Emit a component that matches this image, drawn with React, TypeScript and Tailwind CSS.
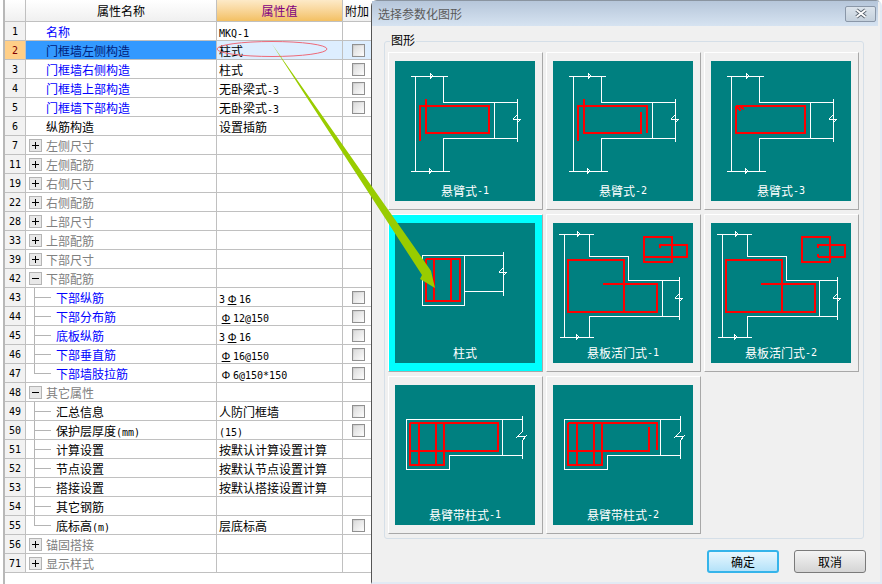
type Row = {
  no: number;
  name?: string;
  value?: string;
  check?: boolean;
  kind: "blue" | "plain" | "closed" | "open" | "childBlue" | "child" | "childLast";
  blueText?: boolean;
};

const rows: Row[] = [
  { no: 1, name: "名称", value: "MKQ-1", kind: "blue" },
  { no: 2, name: "门框墙左侧构造", value: "柱式", check: true, kind: "blue" },
  { no: 3, name: "门框墙右侧构造", value: "柱式", check: true, kind: "blue" },
  { no: 4, name: "门框墙上部构造", value: "无卧梁式-3", check: true, kind: "blue" },
  { no: 5, name: "门框墙下部构造", value: "无卧梁式-3", check: true, kind: "blue" },
  { no: 6, name: "纵筋构造", value: "设置插筋", kind: "plain" },
  { no: 7, name: "左侧尺寸", kind: "closed" },
  { no: 11, name: "左侧配筋", kind: "closed" },
  { no: 19, name: "右侧尺寸", kind: "closed" },
  { no: 22, name: "右侧配筋", kind: "closed" },
  { no: 28, name: "上部尺寸", kind: "closed" },
  { no: 33, name: "上部配筋", kind: "closed" },
  { no: 39, name: "下部尺寸", kind: "closed" },
  { no: 42, name: "下部配筋", kind: "open" },
  { no: 43, name: "下部纵筋", value: "3Ф16", check: true, kind: "childBlue" },
  { no: 44, name: "下部分布筋", value: "Ф12@150", check: true, kind: "childBlue" },
  { no: 45, name: "底板纵筋", value: "3Ф16", check: true, kind: "childBlue" },
  { no: 46, name: "下部垂直筋", value: "Ф16@150", check: true, kind: "childBlue" },
  { no: 47, name: "下部墙肢拉筋", value: "Φ6@150*150", check: true, kind: "childLast", blueText: true },
  { no: 48, name: "其它属性", kind: "open" },
  { no: 49, name: "汇总信息", value: "人防门框墙", check: true, kind: "child" },
  { no: 50, name: "保护层厚度(mm)", value: "(15)", check: true, kind: "child" },
  { no: 51, name: "计算设置", value: "按默认计算设置计算", kind: "child" },
  { no: 52, name: "节点设置", value: "按默认节点设置计算", kind: "child" },
  { no: 53, name: "搭接设置", value: "按默认搭接设置计算", kind: "child" },
  { no: 54, name: "其它钢筋", kind: "child" },
  { no: 55, name: "底标高(m)", value: "层底标高", check: true, kind: "childLast" },
  { no: 56, name: "锚固搭接", kind: "closed" },
  { no: 71, name: "显示样式", kind: "closed" },
];

// SimSun style: latin runs are half width, so they get a smaller mono size
function Txt({ text }: { text: string }) {
  const parts = text.split(/(Φ|Ф|[\x00-\x7f]+)/).filter(Boolean);
  return (
    <>
      {parts.map((p, i) => {
        if (p === "Ф")
          return (
            <span key={i} className="inline-block w-[14px] text-center text-[11px] underline font-['Liberation_Sans',sans-serif]">
              Φ
            </span>
          );
        if (p === "Φ")
          return (
            <span key={i} className="inline-block w-[14px] text-center text-[11px] font-['Liberation_Sans',sans-serif]">
              Φ
            </span>
          );
        if (/^[\x00-\x7f]+$/.test(p))
          return (
            <span key={i} className="text-[10px] whitespace-pre font-['DejaVu_Sans_Mono',monospace]">
              {p}
            </span>
          );
        return <span key={i}>{p}</span>;
      })}
    </>
  );
}

function Checkbox() {
  return (
    <div className="w-[13px] h-[13px] border border-[#909090] bg-gradient-to-br from-[#c8c8c8] to-white p-px">
      <div className="w-full h-full bg-gradient-to-br from-[#dcdcdc] to-[#fafafa]" />
    </div>
  );
}

function ExpandBox({ open }: { open: boolean }) {
  return (
    <div className="relative w-[13px] h-[13px] border border-[#b4b4b4] bg-[#e8e8e8] flex items-center justify-center shrink-0">
      <div className="w-[7px] h-px bg-black" />
      {!open && <div className="absolute w-px h-[7px] bg-black" />}
    </div>
  );
}

function TreeLine({ last }: { last: boolean }) {
  return (
    <div className="w-[17px] h-full flex flex-col shrink-0">
      <div className="h-[10px] border-l border-b border-[#b4b4b4]" />
      {!last && <div className="flex-1 border-l border-[#b4b4b4]" />}
    </div>
  );
}

function PropRow({ row }: { row: Row }) {
  const selected = row.no === 2;
  const isChild = row.kind === "childBlue" || row.kind === "child" || row.kind === "childLast";
  const isGroup = row.kind === "closed" || row.kind === "open";
  const blue = row.kind === "blue" || row.kind === "childBlue" || row.blueText;

  let nameColor = "text-black";
  if (blue) nameColor = "text-[#0000ff]";
  if (isGroup) nameColor = "text-[#808080]";
  if (selected) nameColor = "text-[#00207a] bg-[#3399ff]";

  return (
    <div className="flex h-[19px] border-b border-[#c0c0c0]">
      <div
        className={`w-[21px] shrink-0 border-r border-[#c0c0c0] pt-px flex items-center justify-center text-[10px] font-['DejaVu_Sans_Mono',monospace] ${
          selected ? "bg-[#ffcf88] text-[#800000]" : "bg-[#f2f2f2] text-black"
        }`}
      >
        {row.no}
      </div>
      <div className={`w-[191px] shrink-0 border-r border-[#c0c0c0] flex items-center ${nameColor}`}>
        {isGroup && (
          <div className="pl-[3px] pr-[4px]">
            <ExpandBox open={row.kind === "open"} />
          </div>
        )}
        {isChild && (
          <div className="pl-[8px] pr-[5px] h-full">
            <TreeLine last={row.kind === "childLast"} />
          </div>
        )}
        <span className={isGroup || isChild ? "pt-[2px]" : "pt-[2px] pl-[20px]"}>
          <Txt text={row.name ?? ""} />
        </span>
      </div>
      <div className={`w-[126px] shrink-0 border-r border-[#c0c0c0] pl-[2px] flex items-center ${selected ? "bg-[#ddeeff]" : ""}`}>
        <span className="whitespace-nowrap pt-[2px]">
          <Txt text={row.value ?? ""} />
        </span>
      </div>
      <div className={`w-[28px] shrink-0 pl-[9px] flex items-center ${selected ? "bg-[#ddeeff]" : ""}`}>
        {row.check && <Checkbox />}
      </div>
    </div>
  );
}

function PropTable() {
  return (
    <div className="w-[371px] h-full shrink-0 pl-[3px] bg-white">
      <div className="h-full border-l-2 border-[#b8b8b8]">
        <div className="flex h-[22px] border-b border-[#c0c0c0]">
          <div className="w-[21px] shrink-0 border-r border-[#c0c0c0] bg-gradient-to-b from-white to-[#f0f0f0]" />
          <div className="w-[191px] shrink-0 border-r border-[#c0c0c0] bg-gradient-to-b from-white to-[#f0f0f0] flex items-center justify-center">
            属性名称
          </div>
          <div className="w-[126px] shrink-0 border-r border-[#c0c0c0] bg-gradient-to-b from-[#fdeac8] to-[#f3c062] text-[#800080] flex items-center justify-center">
            属性值
          </div>
          <div className="w-[28px] shrink-0 bg-gradient-to-b from-white to-[#f0f0f0] pl-[2px] flex items-center overflow-hidden whitespace-nowrap">
            附加
          </div>
        </div>
        {rows.map((r) => (
          <PropRow key={r.no} row={r} />
        ))}
      </div>
    </div>
  );
}

function Brk({ d }: { d: string }) {
  return <path d={d} fill="none" stroke="#ffffff" strokeWidth="1" />;
}

const topBreak = (x: number, y: number) => `M${x} ${y - 3} L${x + 3} ${y} L${x} ${y + 3} L${x} ${y - 3}`;
const rightBreak = (x: number, y: number) => `M${x - 4} ${y} L${x + 4} ${y} L${x} ${y + 4} M${x} ${y - 4} L${x - 4} ${y}`;

function CantileverFrame() {
  return (
    <>
      <path
        d="M16 15H53M20 15V110M48 15V41H122M99 41V77M48 77H122M122 38V81M16 110H55M48 77V110"
        fill="none"
        stroke="#ffffff"
      />
      <Brk d={topBreak(35, 15)} />
      <Brk d={topBreak(34, 110)} />
      <Brk d={rightBreak(122, 58)} />
    </>
  );
}

function SlabFrame({ x }: { x: number }) {
  return (
    <>
      <path
        d={`M6 11H41M11 11V114M7 114H41M36 11V33H75V57H126M${x} 57V93M36 93H126M36 93V114M126 54V97`}
        fill="none"
        stroke="#ffffff"
      />
      <Brk d={topBreak(24, 11)} />
      <Brk d={topBreak(23, 114)} />
      <Brk d={rightBreak(126, 75)} />
    </>
  );
}

function ColumnFrame() {
  return (
    <path
      d="M11 34H127M107 34V70M54 70H127M54 70V84H11V34M127 31V47L122 52L131 51L127 56V74"
      fill="none"
      stroke="#ffffff"
    />
  );
}

function Red({ d }: { d: string }) {
  return <path d={d} fill="none" stroke="#ff0000" strokeWidth="2" strokeLinejoin="round" />;
}

const drawings: { label: string; art: React.ReactNode; selected?: boolean }[] = [
  {
    label: "悬臂式-1",
    art: (
      <>
        <CantileverFrame />
        <Red d="M25 80V45H94V72H31V38" />
      </>
    ),
  },
  {
    label: "悬臂式-2",
    art: (
      <>
        <CantileverFrame />
        <Red d="M25 80V45H94V72M31 38V72H88V51" />
      </>
    ),
  },
  {
    label: "悬臂式-3",
    art: (
      <>
        <CantileverFrame />
        <Red d="M25 45H94V72H25V45M25 45L30 50M28 45L33 48" />
      </>
    ),
  },
  {
    label: "柱式",
    selected: true,
    art: (
      <>
        <path d="M27 32H108M27 32V82H69V32M69 68H108M108 29V73" fill="none" stroke="#ffffff" />
        <Brk d={rightBreak(108, 49)} />
        <Red d="M31 36H65V78H31V36M39 36V78M56 36V78" />
      </>
    ),
  },
  {
    label: "悬板活门式-1",
    art: (
      <>
        <SlabFrame x={109} />
        <Red d="M71 89H15V37H71V89H104V61H50" />
        <Red d="M91 34V14H119V39H91V34H134V22H107V25" />
      </>
    ),
  },
  {
    label: "悬板活门式-2",
    art: (
      <>
        <SlabFrame x={108} />
        <Red d="M71 89H15V37H71V89H104V61H50" />
        <Red d="M107 14H91V39H119V14H107M107 34H134V22H107V25M107 34V31" />
      </>
    ),
  },
  {
    label: "悬臂带柱式-1",
    art: (
      <>
        <ColumnFrame />
        <Red d="M15 38H103V66H15V38M15 66V80H49V38M24 38V80M41 38V80" />
      </>
    ),
  },
  {
    label: "悬臂带柱式-2",
    art: (
      <>
        <ColumnFrame />
        <Red d="M15 38H104V65M96 42V66H15V38M15 66V80H49V38M24 38V80M41 38V80" />
      </>
    ),
  },
];

function Tile({ label, art, selected }: { label: string; art: React.ReactNode; selected?: boolean }) {
  return (
    <div
      className={`w-[155px] h-[158px] border border-t-white border-l-white border-r-[#a8a8a8] border-b-[#a8a8a8] pl-[6px] pr-[7px] py-2 ${
        selected ? "bg-[#00ffff]" : ""
      }`}
    >
      <div className="w-[140px] h-[140px] bg-[#008080] flex flex-col">
        <svg width="140" height="120" viewBox="0 0 140 120" shapeRendering="crispEdges" className="block">
          {art}
        </svg>
        <div className="h-5 flex items-center justify-center text-white">
          <Txt text={label} />
        </div>
      </div>
    </div>
  );
}

function Dialog() {
  return (
    <div className="relative w-[511px] h-[584px] flex flex-col pb-0.5 pr-0.5 bg-[#f0f0f0] border-l border-[#555555] border-r-2 border-b-2 border-r-[#e2eaf4] border-b-[#e2eaf4] border-t border-t-[#8a94a0] rounded-tl-md rounded-tr-md">
      <div className="h-[25px] shrink-0 flex items-center justify-between bg-gradient-to-b from-[#b6c6da] to-[#d6e3f1] pl-[6px] pr-[2px] text-[#5a5a5a]">
        <span>选择参数化图形</span>
        <div className="w-[31px] h-[16px] border border-[#8a97a8] rounded-[2px] bg-gradient-to-b from-[#dce4ec] to-[#c4d0dc] flex items-center justify-center">
          <svg width="14" height="11" viewBox="0 0 14 11">
            <path d="M2.5 2L11.5 9M11.5 2L2.5 9" stroke="#59636e" strokeWidth="3.6" />
            <path d="M2.5 2L11.5 9M11.5 2L2.5 9" stroke="#ffffff" strokeWidth="1.8" />
          </svg>
        </div>
      </div>
      <div className="relative ml-[12px] mt-[15px] w-[480px] h-[498px] border border-[#d5dfe8] rounded-[3px] pl-[3px] pt-[10px]">
        <span className="absolute -top-[8px] left-[5px] bg-[#f0f0f0] text-black pl-px pr-px">图形</span>
        <div className="grid grid-cols-[repeat(3,155px)] gap-x-[3px] gap-y-1">
          {drawings.map((d) => (
            <Tile key={d.label} label={d.label} art={d.art} selected={d.selected} />
          ))}
        </div>
      </div>
      <div className="flex ml-[335px] mt-[11px] gap-[15px]">
        <button className="w-[72px] h-[23px] rounded-[3px] border-2 border-[#35b4ea] bg-gradient-to-b from-[#e8f7fe] to-[#b4e2f9] text-black">
          确定
        </button>
        <button className="w-[72px] h-[23px] rounded-[3px] border border-[#7a7a7a] bg-gradient-to-b from-[#f4f4f4] to-[#d4d4d4] text-black">
          取消
        </button>
      </div>
    </div>
  );
}

export default function App() {
  return (
    <div className="relative w-[882px] h-[584px] overflow-hidden flex bg-white text-[12px] leading-none text-black font-['Noto_Sans_CJK_SC','Liberation_Sans',sans-serif]">
      <PropTable />
      <Dialog />
      {/* callout drawn over both the grid and the dialog */}
      <svg width="882" height="584" viewBox="0 0 882 584" className="absolute inset-0 pointer-events-none">
        <ellipse cx="272" cy="49" rx="55" ry="7.5" fill="none" stroke="#ee6a78" strokeWidth="1" />
        <polygon points="272,44 429,268 431,271 435,288 420,279 422,275" fill="#99cc00" />
      </svg>
    </div>
  );
}
